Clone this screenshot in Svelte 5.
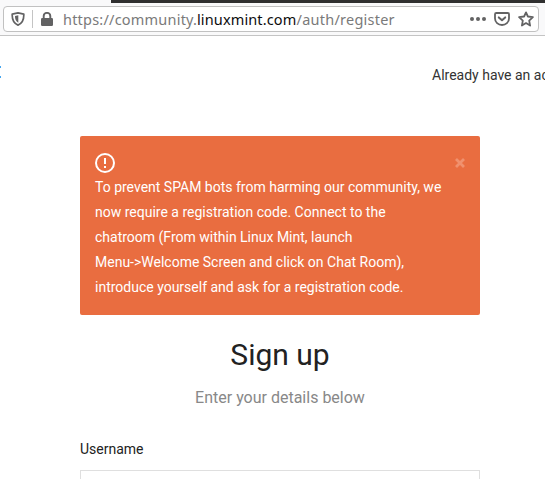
<script>
  const message = [
    'To prevent SPAM bots from harming our community, we',
    'now require a registration code. Connect to the',
    'chatroom (From within Linux Mint, launch',
    'Menu->Welcome Screen and click on Chat Room),',
    'introduce yourself and ask for a registration code.'
  ];
</script>

<div class="window">
  <header class="toolbar">
    <div class="tabs"></div>
    <div class="address">
      <svg class="shield" width="14" height="14" viewBox="0 0 14 14">
        <path d="M7 .9 12.8 2.2C13 7.6 11.5 11.3 7 13.1 2.5 11.3 1 7.6 1.2 2.2Z" fill="none" stroke="#626263" stroke-width="1.7" stroke-linejoin="round" />
        <path d="M7.3 3.3V10.8C4.8 9.4 4 7.1 4 4Z" fill="#626263" />
      </svg>
      <span class="divider"></span>
      <svg class="lock" width="12" height="14" viewBox="0 0 12 14">
        <path d="M2.7 7V4.1a3.3 3.3 0 0 1 6.6 0V7" fill="none" stroke="#626263" stroke-width="1.9" />
        <rect x="0" y="6" width="12" height="8" rx="1.2" fill="#626263" />
      </svg>
      <div class="url"><span class="sub">https://community.</span><span class="domain">linuxmint.com</span><span class="path">/auth/register</span></div>
      <div class="actions">
        <svg width="16" height="16" viewBox="0 0 16 16" fill="#626263">
          <circle cx="2" cy="8" r="2" /><circle cx="8" cy="8" r="2" /><circle cx="14" cy="8" r="2" />
        </svg>
        <svg width="16" height="16" viewBox="0 0 16 16" fill="none" stroke="#626263" stroke-width="2" stroke-linecap="round" stroke-linejoin="round">
          <path d="M2.3 2H13.7Q15 2 15 3.3V7.5a7 6.5 0 0 1-14 0V3.3Q1 2 2.3 2Z" stroke-width="1.8" />
          <path d="M4.8 6.4 8 9.3l3.2-2.9" />
        </svg>
        <svg width="16" height="16" viewBox="0 0 16 16" fill="none" stroke="#626263" stroke-width="1.8" stroke-linejoin="round">
          <path d="M8 1.4 9.9 5.5 14.9 6.2 11.2 9.6 12.1 14.6 8 12.1 3.9 14.6 4.8 9.6 1.1 6.2 6.1 5.5Z" />
        </svg>
      </div>
    </div>
  </header>

  <nav>
    <svg class="logo" width="1" height="14" viewBox="0 0 1 14" fill="#45a5ee">
      <rect width="1" height="2" y="1" /><rect width="1" height="2" y="11" />
    </svg>
    <span class="account">Already have an ac</span>
  </nav>

  <main>
    <section class="alert">
      <div class="alert-head">
        <svg width="20" height="20" viewBox="0 0 20 20" fill="none" stroke="#fff" stroke-width="2">
          <circle cx="10" cy="10" r="9" />
          <path d="M10 5v6M10 13v2" />
        </svg>
        <button aria-label="Close">
          <svg width="10" height="10" viewBox="0 0 10 10" stroke="#f0916e" stroke-width="2.8">
            <path d="M1 1 9 9M9 1 1 9" />
          </svg>
        </button>
      </div>
      <p>{#each message as line}<span>{line}</span>{/each}</p>
    </section>
    <h1>Sign up</h1>
    <p class="subtitle">Enter your details below</p>
    <label for="username">Username</label>
    <input id="username" type="text" />
  </main>
</div>

<style>
  .window {
    width: 545px;
    height: 479px;
    overflow: hidden;
    background: #fff;
    font-family: Roboto, sans-serif;
    color: #212529;
  }
  .toolbar {
    box-sizing: border-box;
    height: 36px;
    background: #f9f9fa;
    border-bottom: 1px solid #c4c4c4;
  }
  .tabs {
    height: 3px;
    margin-left: 111px;
    background: #303030;
  }
  .address {
    box-sizing: border-box;
    display: flex;
    align-items: center;
    width: 536px;
    height: 26px;
    margin: 3px 0 0 3px;
    padding: 0 4px 0 7px;
    border: 1px solid #c1c1c1;
    border-radius: 4px;
    background: #fff;
  }
  .divider {
    width: 1px;
    height: 18px;
    margin: 0 8px 0 7px;
    background: #c4c4c4;
  }
  .url {
    display: flex;
    margin-left: 10px;
    font: 14.5px/24px "Noto Sans", sans-serif;
    white-space: nowrap;
    color: #7a7a7a;
  }
  .sub { width: 134px; letter-spacing: 0.21px; }
  .domain { width: 99.5px; letter-spacing: 0.13px; color: #0c0c0d; }
  .path { letter-spacing: 0.24px; }
  .actions {
    display: flex;
    gap: 8px;
    margin-left: auto;
  }
  nav {
    display: flex;
    justify-content: space-between;
    height: 100px;
    padding-top: 29px;
    box-sizing: border-box;
  }
  .account {
    width: 113px;
    white-space: nowrap;
    font-size: 14px;
    line-height: 20px;
    color: #333;
  }
  main {
    width: 400px;
    margin-left: 80px;
  }
  .alert {
    box-sizing: border-box;
    height: 179px;
    padding: 17px 15px 0;
    border-radius: 2px;
    background: #e96d40;
    color: #fff;
  }
  .alert-head {
    display: flex;
    justify-content: space-between;
    align-items: center;
    height: 20px;
  }
  button {
    display: flex;
    padding: 0;
    border: 0;
    background: none;
  }
  .alert p {
    margin: 2px 0 0;
    font-size: 14px;
    line-height: 25px;
  }
  .alert span {
    display: block;
    white-space: nowrap;
  }
  h1 {
    margin: 20px 0 0;
    font-size: 30px;
    font-weight: 400;
    line-height: 40px;
    text-align: center;
    color: #222;
  }
  .subtitle {
    margin: 11px 0 0;
    font-size: 16px;
    line-height: 24px;
    text-align: center;
    color: #888;
  }
  label {
    display: block;
    margin-top: 29px;
    font-size: 14px;
    line-height: 20px;
    color: #222;
  }
  input {
    box-sizing: border-box;
    display: block;
    width: 400px;
    height: 42px;
    margin: 11px 0 0;
    border: 1px solid #dfdfdf;
    background: #fff;
  }
</style>
